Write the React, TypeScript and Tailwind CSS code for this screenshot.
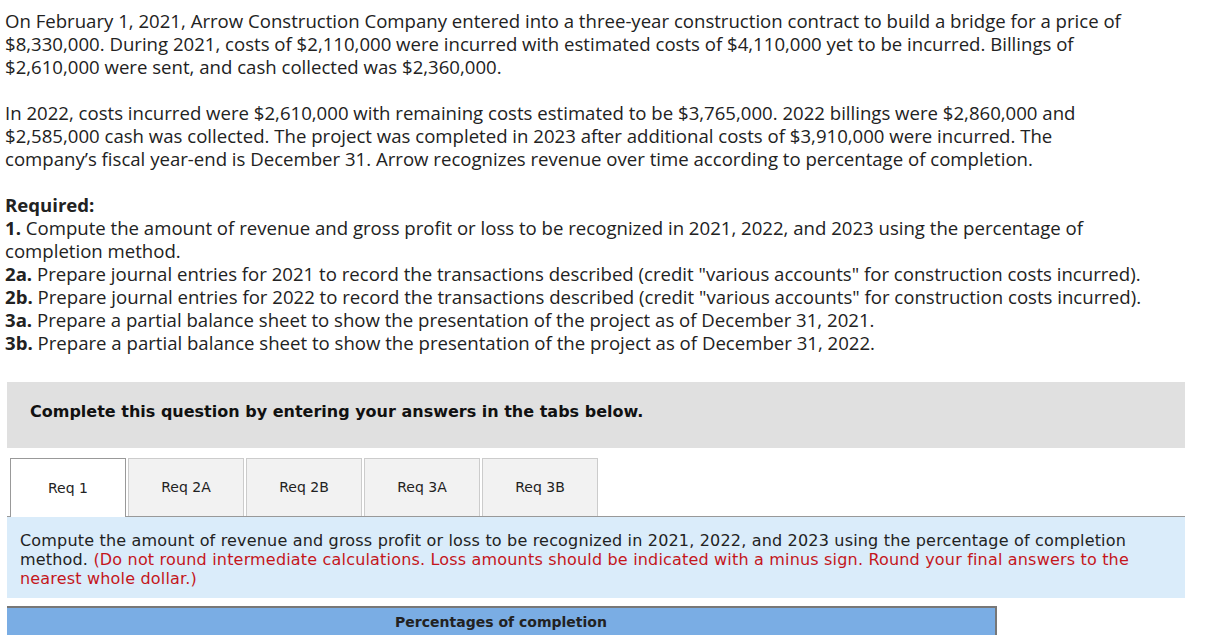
const tabs = ['Req 1', 'Req 2A', 'Req 2B', 'Req 3A', 'Req 3B']

const para1 = [
  'On February 1, 2021, Arrow Construction Company entered into a three-year construction contract to build a bridge for a price of',
  '$8,330,000. During 2021, costs of $2,110,000 were incurred with estimated costs of $4,110,000 yet to be incurred. Billings of',
  '$2,610,000 were sent, and cash collected was $2,360,000.',
]

const para2 = [
  'In 2022, costs incurred were $2,610,000 with remaining costs estimated to be $3,765,000. 2022 billings were $2,860,000 and',
  '$2,585,000 cash was collected. The project was completed in 2023 after additional costs of $3,910,000 were incurred. The',
  'company’s fiscal year-end is December 31. Arrow recognizes revenue over time according to percentage of completion.',
]

const reqs: [string, string][] = [
  ['1.', 'Compute the amount of revenue and gross profit or loss to be recognized in 2021, 2022, and 2023 using the percentage of'],
  ['', 'completion method.'],
  ['2a.', 'Prepare journal entries for 2021 to record the transactions described (credit "various accounts" for construction costs incurred).'],
  ['2b.', 'Prepare journal entries for 2022 to record the transactions described (credit "various accounts" for construction costs incurred).'],
  ['3a.', 'Prepare a partial balance sheet to show the presentation of the project as of December 31, 2021.'],
  ['3b.', 'Prepare a partial balance sheet to show the presentation of the project as of December 31, 2022.'],
]

export default function App() {
  return (
    <div className="min-h-screen bg-white">
      {/* Problem text */}
      <div className="pl-[5px] pt-[9px] text-[18.6px] leading-[23px] text-[#222] whitespace-nowrap" style={{ fontFamily: '"Open Sans", Lato, sans-serif' }}>
        <div>
          {para1.map(l => (
            <p key={l}>{l}</p>
          ))}
        </div>
        <div className="mt-[23px]">
          {para2.map(l => (
            <p key={l}>{l}</p>
          ))}
        </div>
        <div className="mt-[23px]">
          <p className="font-bold">Required:</p>
          {reqs.map(([n, t]) => (
            <p key={t}>
              {n && <span className="font-bold">{n} </span>}
              {t}
            </p>
          ))}
        </div>
      </div>

      {/* Question panel */}
      <div className="mt-[28px] ml-[7px] w-[1178px]" style={{ fontFamily: 'Tahoma, "DejaVu Sans", Verdana, sans-serif' }}>
        <div className="h-[66px] bg-[#e0e0e0] pl-[23px] pt-[18px] text-[16px] font-bold text-[#111]">
          Complete this question by entering your answers in the tabs below.
        </div>

        <div className="mt-[10px] flex items-end gap-[2px] pl-[3px]">
          {tabs.map((t, i) => (
            <div
              key={t}
              className={
                i === 0
                  ? 'relative z-10 -mb-px flex h-[59px] w-[116px] items-center justify-center border border-b-0 border-[#999] bg-white text-[14px] text-[#222]'
                  : 'flex h-[58px] w-[116px] items-center justify-center border border-b-0 border-[#ccc] bg-[#f2f2f2] text-[14px] text-[#222]'
              }
            >
              {t}
            </div>
          ))}
        </div>

        <div className="border-t border-[#999] bg-[#daecfa] px-[13px] pt-[14px] pb-[10px] text-[16px] leading-[19px] tracking-[0.18px] text-[#222] whitespace-nowrap">
          <p>Compute the amount of revenue and gross profit or loss to be recognized in 2021, 2022, and 2023 using the percentage of completion</p>
          <p>
            method.{' '}
            <span className="text-[#c4161c]">
              (Do not round intermediate calculations. Loss amounts should be indicated with a minus sign. Round your final answers to the
            </span>
          </p>
          <p className="text-[#c4161c]">nearest whole dollar.)</p>
        </div>

        <div className="mt-[8px] flex h-[30px] w-[990px] items-center justify-center border-t-2 border-r-2 border-[#777] bg-[#7aade4] text-[14px] font-bold text-[#222]">
          Percentages of completion
        </div>
      </div>
    </div>
  )
}
